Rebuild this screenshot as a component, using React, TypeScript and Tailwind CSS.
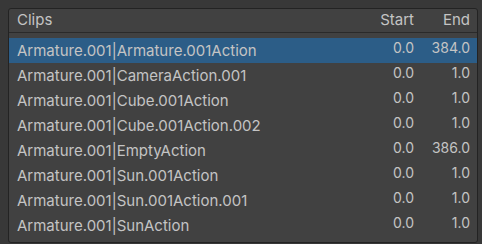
const clips = [
  { name: "Armature.001|Armature.001Action", start: "0.0", end: "384.0" },
  { name: "Armature.001|CameraAction.001", start: "0.0", end: "1.0" },
  { name: "Armature.001|Cube.001Action", start: "0.0", end: "1.0" },
  { name: "Armature.001|Cube.001Action.002", start: "0.0", end: "1.0" },
  { name: "Armature.001|EmptyAction", start: "0.0", end: "386.0" },
  { name: "Armature.001|Sun.001Action", start: "0.0", end: "1.0" },
  { name: "Armature.001|Sun.001Action.001", start: "0.0", end: "1.0" },
  { name: "Armature.001|SunAction", start: "0.0", end: "1.0" },
];

export default function App() {
  const selected = 0;
  return (
    <div className="h-[244px] w-[482px] bg-[#383838] pl-2 pt-2 pr-[4px] font-['Inter',sans-serif] text-[#c4c4c4]">
      <div className="flex h-[235px] w-[470px] flex-col rounded-[3px] border border-[#232323] bg-[#414141]">
        {/* Header */}
        <div className="flex h-6 items-center border-b border-[#2a2a2a] pr-[7px] text-[15px]">
          <span className="flex-1 pl-2">Clips</span>
          <span className="w-[60px] text-right">Start</span>
          <span className="w-[56px] text-right">End</span>
        </div>

        {/* Rows */}
        <div className="pt-[5px]">
          {clips.map((c, i) => (
            <div
              key={c.name}
              className={
                "flex h-[25px] items-center pr-[7px] " + (i === selected ? "bg-[#2c5d87]" : "")
              }
            >
              <span className="flex-1 pl-2 text-[15px] leading-none">{c.name}</span>
              <span className="-mt-[5px] w-[60px] text-right text-[14px] leading-none">{c.start}</span>
              <span className="-mt-[5px] w-[56px] text-right text-[14px] leading-none">{c.end}</span>
            </div>
          ))}
        </div>
      </div>
    </div>
  );
}
